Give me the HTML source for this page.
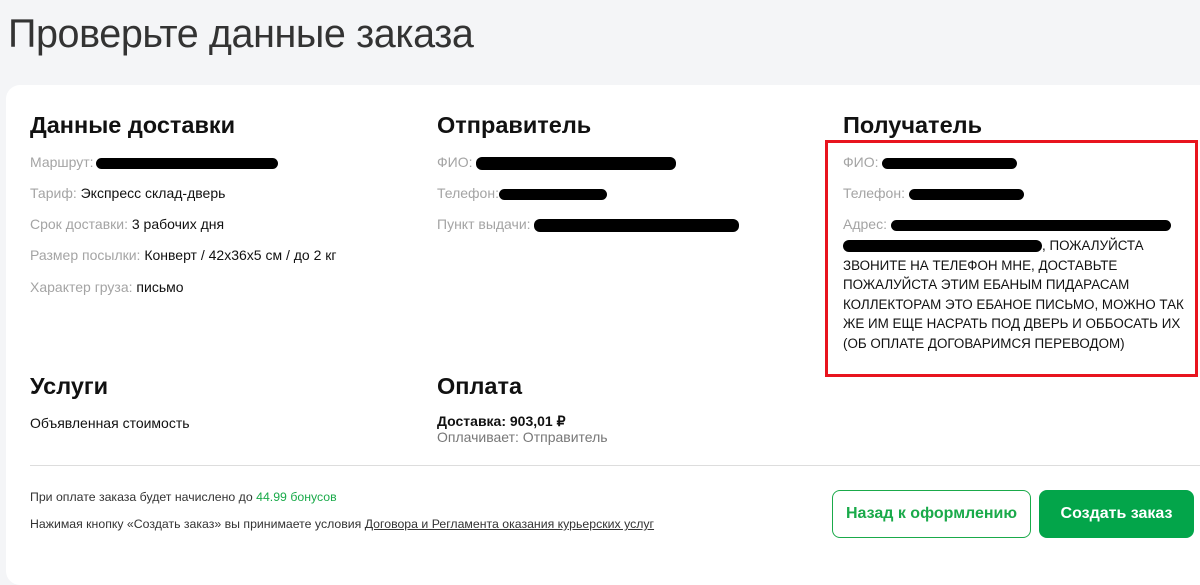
<!DOCTYPE html>
<html><head><meta charset="utf-8">
<style>
*{margin:0;padding:0;box-sizing:border-box}
body{width:1200px;height:557px;overflow:hidden;background:#f4f5f7;font-family:"Liberation Sans",sans-serif;position:relative;color:#111}
.a{position:absolute;white-space:nowrap}
.t{font-size:39.5px;font-weight:300;color:#333;left:8px;top:12px;letter-spacing:-0.4px}
.card{position:absolute;left:6px;top:85px;width:1220px;height:500px;background:#fff;border-radius:14px}
h2{position:absolute;font-size:23.5px;font-weight:bold;white-space:nowrap;color:#111}
.r{position:absolute;font-size:14px;white-space:nowrap;color:#111}
.g{color:#a4a4a4}
.b{display:inline-block;background:#000;border-radius:6px;height:11px;vertical-align:middle}
.up{position:absolute;left:843px;top:236px;font-size:13.4px;line-height:19.5px;color:#111;white-space:nowrap}
.red{position:absolute;left:825px;top:140px;width:373px;height:237px;border:3px solid #e8141e}
.btn{position:absolute;top:490px;height:48px;border-radius:8px;font-size:16px;font-weight:bold;display:flex;align-items:center;justify-content:center}
</style></head><body>
<div class="a t">Проверьте данные заказа</div>
<div class="card"></div>

<h2 style="left:30px;top:112px">Данные доставки</h2>
<div class="r" style="left:30px;top:154px"><span class="g">Маршрут:</span><span class="b" style="width:182px;margin-left:2px"></span></div>
<div class="r" style="left:30px;top:185px"><span class="g">Тариф:</span> Экспресс склад-дверь</div>
<div class="r" style="left:30px;top:216px"><span class="g">Срок доставки:</span> 3 рабочих дня</div>
<div class="r" style="left:30px;top:247px"><span class="g">Размер посылки:</span> Конверт / 42x36x5 см / до 2 кг</div>
<div class="r" style="left:30px;top:279px"><span class="g">Характер груза:</span> письмо</div>

<h2 style="left:437px;top:112px">Отправитель</h2>
<div class="r" style="left:437px;top:154px"><span class="g">ФИО:</span> <span class="b" style="width:200px;height:13px"></span></div>
<div class="r" style="left:437px;top:185px"><span class="g">Телефон:</span><span class="b" style="width:108px"></span></div>
<div class="r" style="left:437px;top:216px"><span class="g">Пункт выдачи:</span> <span class="b" style="width:205px;height:13px"></span></div>

<h2 style="left:843px;top:112px">Получатель</h2>
<div class="red"></div>
<div class="r" style="left:843px;top:154px"><span class="g">ФИО:</span> <span class="b" style="width:135px"></span></div>
<div class="r" style="left:843px;top:185px"><span class="g">Телефон:</span> <span class="b" style="width:115px"></span></div>
<div class="r" style="left:843px;top:216px"><span class="g">Адрес:</span> <span class="b" style="width:280px"></span></div>
<div class="up"><span class="b" style="width:199px;height:12px"></span>, ПОЖАЛУЙСТА<br>ЗВОНИТЕ НА ТЕЛЕФОН МНЕ, ДОСТАВЬТЕ<br>ПОЖАЛУЙСТА ЭТИМ ЕБАНЫМ ПИДАРАСАМ<br>КОЛЛЕКТОРАМ ЭТО ЕБАНОЕ ПИСЬМО, МОЖНО ТАК<br>ЖЕ ИМ ЕЩЕ НАСРАТЬ ПОД ДВЕРЬ И ОББОСАТЬ ИХ<br>(ОБ ОПЛАТЕ ДОГОВАРИМСЯ ПЕРЕВОДОМ)</div>

<h2 style="left:30px;top:373px">Услуги</h2>
<div class="r" style="left:30px;top:415px">Объявленная стоимость</div>
<h2 style="left:437px;top:373px">Оплата</h2>
<div class="r" style="left:437px;top:413px;font-weight:bold">Доставка: 903,01 ₽</div>
<div class="r" style="left:437px;top:429px;color:#777">Оплачивает: Отправитель</div>

<div style="position:absolute;left:30px;top:465px;width:1170px;height:1px;background:#ddd"></div>
<div class="r" style="left:30px;top:490px;font-size:12.3px;color:#333">При оплате заказа будет начислено до <span style="color:#1aaa4a">44.99 бонусов</span></div>
<div class="r" style="left:30px;top:517px;font-size:12.3px;color:#333">Нажимая кнопку «Создать заказ» вы принимаете условия <span style="text-decoration:underline">Договора и Регламента оказания курьерских услуг</span></div>

<div class="btn" style="left:832px;width:199px;border:1px solid #1aaa4a;color:#1aaa4a;background:#fff">Назад к оформлению</div>
<div class="btn" style="left:1039px;width:155px;background:#03a54a;color:#fff">Создать заказ</div>
</body></html>
